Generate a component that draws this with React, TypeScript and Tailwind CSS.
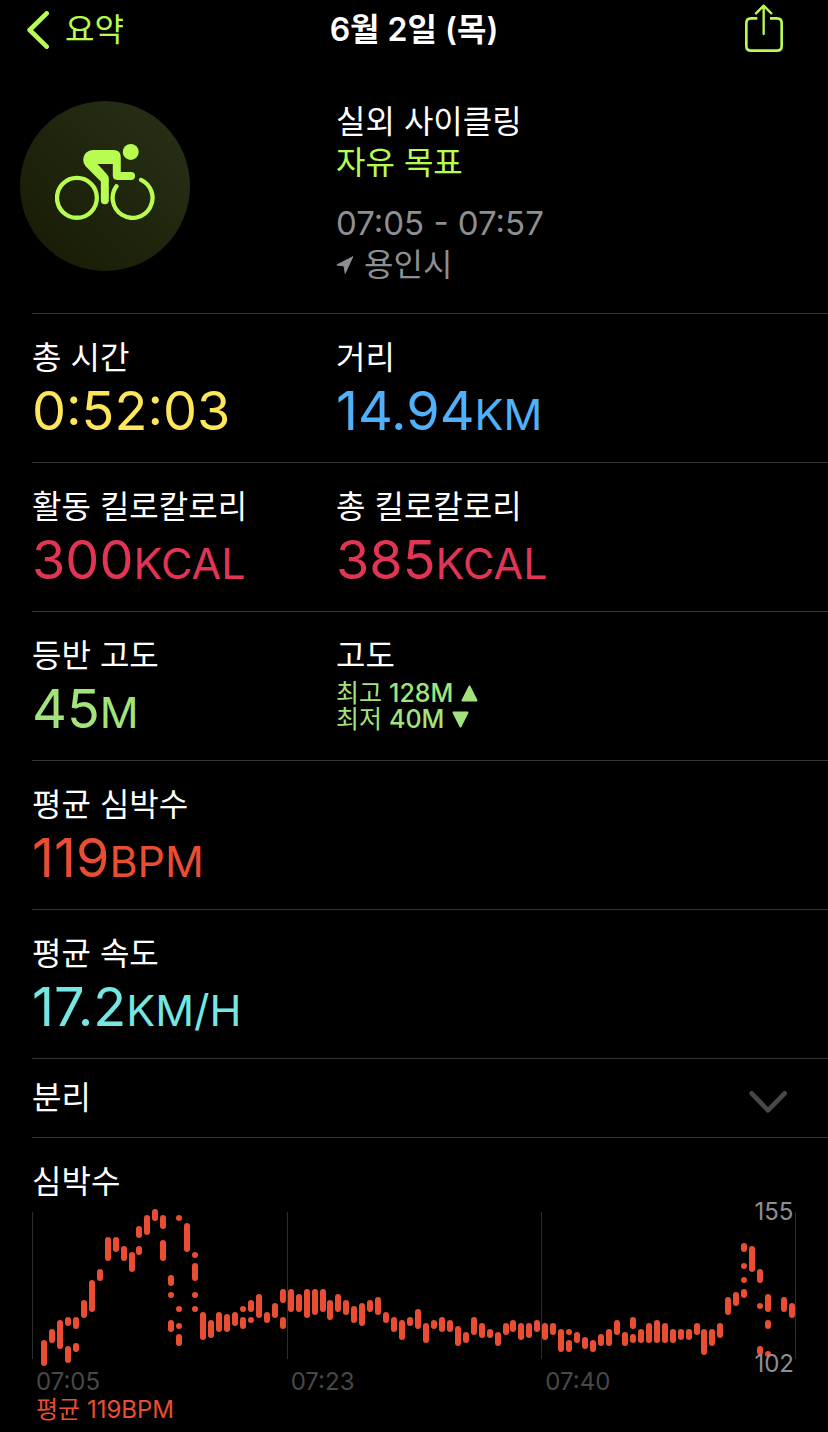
import { ReactNode } from "react";

type Range = [number, number];

// Heart rate ranges per slot, top and bottom on the chart's 164 unit scale
const heartRate: Range[][] = [
  [[136, 162]], [[125, 139]], [[116, 145]], [[113, 122], [142, 159]], [[113, 125], [139, 148]],
  [[96, 114]], [[76, 108]], [[65, 77]], [[33, 57]], [[33, 48]],
  [[42, 57]], [[48, 68]], [[22, 34], [42, 51]], [[11, 31]], [[5, 17]],
  [[11, 25], [36, 57]], [[71, 82], [88, 94], [116, 128]], [[11, 17], [102, 108], [119, 125], [130, 142]], [[19, 48]], [[48, 54], [59, 77], [88, 94], [102, 108]],
  [[108, 136]], [[116, 134]], [[108, 128]], [[110, 128]], [[108, 122]],
  [[102, 108], [113, 125]], [[96, 108], [113, 119]], [[90, 114]], [[108, 119]], [[99, 114]],
  [[85, 99], [113, 125]], [[85, 108]], [[90, 108]], [[85, 114]], [[85, 111]],
  [[85, 108]], [[96, 116]], [[90, 108]], [[96, 111]], [[102, 119]],
  [[99, 122]], [[96, 108]], [[93, 111]], [[108, 119]], [[113, 128]],
  [[116, 136]], [[113, 122]], [[105, 125]], [[119, 139]], [[116, 125]],
  [[113, 128]], [[116, 128]], [[122, 142]], [[128, 139]], [[113, 131]],
  [[119, 134]], [[125, 134]], [[128, 142]], [[119, 131]], [[116, 128]],
  [[119, 136]], [[119, 134]], [[116, 128]], [[119, 136]], [[119, 131]],
  [[125, 148]], [[125, 131], [136, 148]], [[128, 139]], [[133, 145]], [[136, 148]],
  [[130, 142]], [[125, 142]], [[116, 131]], [[128, 142]], [[113, 125], [130, 139]],
  [[125, 139]], [[119, 139]], [[116, 139]], [[119, 139]], [[125, 139]],
  [[125, 136]], [[125, 136]], [[119, 131]], [[125, 151]], [[125, 142]],
  [[119, 134]], [[93, 111]], [[88, 102]], [[39, 48], [59, 65], [73, 79], [85, 94]], [[42, 68]],
  [[65, 79], [99, 105], [142, 151]], [[90, 108], [116, 125], [147, 153]], [], [[93, 108]], [[99, 114]],
];

const slotX = (i: number) => Math.round(12 + (i * 748) / 94);

const BackIcon = () => (
  <svg className="h-[38px] w-[22px]" viewBox="81 30 66 114" fill="none" stroke="currentColor" strokeWidth="14" strokeLinecap="round" strokeLinejoin="round" aria-hidden="true">
    <path d="M140 37L89 87L140 137" />
  </svg>
);

const ShareIcon = () => (
  <svg className="h-12 w-[38px]" viewBox="1275 12 114 144" fill="none" stroke="currentColor" strokeWidth="8" strokeLinejoin="round" aria-hidden="true">
    <path d="M1312 55H1293Q1279 55 1279 69V138Q1279 152 1293 152H1371Q1385 152 1385 138V69Q1385 55 1371 55H1350" />
    <path d="M1331 18V102M1308 40L1331 17L1354 40" strokeLinecap="round" strokeWidth="7" />
  </svg>
);

const CyclistIcon = () => (
  <svg className="h-auto w-[100px]" viewBox="165 432 301 229" fill="none" aria-hidden="true">
    <g stroke="currentColor" strokeWidth="13" strokeLinecap="round">
      <circle cx="231" cy="594" r="60" />
      <path d="M350 559A60 60 0 1 0 424 540" />
    </g>
    <g fill="currentColor">
      <circle cx="393" cy="456" r="24" />
      <path d="M280 450H341Q363 450 363 472V516H394A12 12 0 0 1 394 540H352Q339 540 339 527V492H293L322 524Q327 530 327 538V601A12 12 0 0 1 303 601V545L257 499Q250 490 250 480C250 463 263 450 280 450Z" />
    </g>
  </svg>
);

const LocationIcon = () => (
  <svg className="h-[18px] w-[18px]" viewBox="51 770 53 54" fill="currentColor" stroke="currentColor" strokeWidth="3" strokeLinejoin="round" aria-hidden="true">
    <path d="M101 772L53 797L75 800L78 822Z" />
  </svg>
);

const ChevronDownIcon = () => (
  <svg className="h-[22px] w-[38px]" viewBox="446 126 114 66" fill="none" stroke="currentColor" strokeWidth="14" strokeLinecap="round" strokeLinejoin="round" aria-hidden="true">
    <path d="M454 133L503 184L553 133" />
  </svg>
);

const Triangle = ({ down = false }: { down?: boolean }) => (
  <svg className="h-[17px] w-[17px]" viewBox="0 0 34 34" fill="currentColor" stroke="currentColor" strokeWidth="4" strokeLinejoin="round" aria-hidden="true">
    <path d={down ? "M3 3H31L17 31Z" : "M17 3L31 31H3Z"} />
  </svg>
);

interface MetricProps {
  label: string;
  value: string;
  unit?: string;
  color: string;
}

const Metric = ({ label, value, unit, color }: MetricProps) => (
  <div>
    <dt className="leading-10">{label}</dt>
    <dd className={`text-[54px] leading-[66px] ${color}`}>
      {value}
      {unit && <span className="text-[43px] leading-none">{unit}</span>}
    </dd>
  </div>
);

const Row = ({ children }: { children: ReactNode }) => (
  <dl className="grid grid-cols-[304px_1fr] border-b border-[#363638] pt-6 pb-[18px]">
    {children}
  </dl>
);

const HeartRateChart = () => (
  <section className="pt-6 pr-8 pb-2">
    <h2 className="leading-10">심박수</h2>
    <div className="relative mt-0.5">
      <svg className="block h-auto w-full" viewBox="0 0 764 164" role="img" aria-label="심박수">
        {[0, 255, 509, 763].map((x) => (
          <rect key={x} x={x} y="8" width="1" height="147" fill="#2c2c2e" />
        ))}
        {heartRate.map((ranges, i) =>
          ranges.map(([top, bottom]) => (
            <rect key={`${i}-${top}`} x={slotX(i) - 3} y={top} width="6" height={bottom - top} rx="3" fill="#e94e32" />
          ))
        )}
      </svg>
      <div className="absolute top-0 right-0.5 -bottom-1 flex flex-col justify-between text-2xl leading-4 text-[#8e8e93]">
        <span>155</span>
        <span>102</span>
      </div>
    </div>
    <div className="grid grid-cols-3 text-2xl leading-7 text-[#48484a]">
      <span className="pl-1">07:05</span>
      <span className="pl-1">07:23</span>
      <span className="pl-1">07:40</span>
    </div>
    <p className="pl-1 text-2xl leading-7 text-[#e94e32]">평균 119BPM</p>
  </section>
);

export default function App() {
  return (
    <main className="min-h-screen bg-black font-['Inter','Noto_Sans_CJK_KR',sans-serif] text-[32px] text-white">
      <header className="grid h-[60px] grid-cols-[1fr_auto_1fr] items-center px-[27px]">
        <button type="button" className="flex items-center gap-4 justify-self-start text-[#b9fc51]">
          <BackIcon />
          요약
        </button>
        <h1 className="font-semibold">6월 2일 (목)</h1>
        <button type="button" aria-label="공유" className="justify-self-end pr-[18px] pb-1 text-[#b9fc51]">
          <ShareIcon />
        </button>
      </header>

      <section className="grid grid-cols-[316px_1fr] pt-[41px] pb-7 pl-5">
        <div className="flex size-[170px] items-center justify-center rounded-full bg-linear-to-tr from-[#171a04] to-[#283218] pb-2 text-[#b9fc51]">
          <CyclistIcon />
        </div>
        <div className="leading-[41px]">
          <p>실외 사이클링</p>
          <p className="text-[#b9fc51]">자유 목표</p>
          <p className="mt-5 text-[33px] text-[#8e8e93]">07:05 - 07:57</p>
          <p className="flex items-center gap-2.5 text-[#8e8e93]">
            <LocationIcon />
            용인시
          </p>
        </div>
      </section>

      <div className="ml-8 border-t border-[#363638]">
        <Row>
          <Metric label="총 시간" value="0:52:03" color="text-[#fde55c]" />
          <Metric label="거리" value="14.94" unit="KM" color="text-[#50b0f9]" />
        </Row>
        <Row>
          <Metric label="활동 킬로칼로리" value="300" unit="KCAL" color="text-[#e23556]" />
          <Metric label="총 킬로칼로리" value="385" unit="KCAL" color="text-[#e23556]" />
        </Row>
        <Row>
          <Metric label="등반 고도" value="45" unit="M" color="text-[#a2e47b]" />
          <div>
            <dt className="leading-10">고도</dt>
            <dd className="mt-1 text-[25px] leading-[26px] text-[#a2e47b]">
              <p className="flex items-center gap-2">
                <span>
                  최고 <span className="font-medium">128M</span>
                </span>
                <Triangle />
              </p>
              <p className="flex items-center gap-2">
                <span>
                  최저 <span className="font-medium">40M</span>
                </span>
                <Triangle down />
              </p>
            </dd>
          </div>
        </Row>
        <Row>
          <Metric label="평균 심박수" value="119" unit="BPM" color="text-[#e94e32]" />
        </Row>
        <Row>
          <Metric label="평균 속도" value="17.2" unit="KM/H" color="text-[#75e6e1]" />
        </Row>
        <button type="button" aria-expanded="false" className="flex h-[79px] w-full items-center justify-between border-b border-[#363638] pr-[41px]">
          분리
          <span className="pt-2 text-[#48484a]">
            <ChevronDownIcon />
          </span>
        </button>
        <HeartRateChart />
      </div>
    </main>
  );
}
